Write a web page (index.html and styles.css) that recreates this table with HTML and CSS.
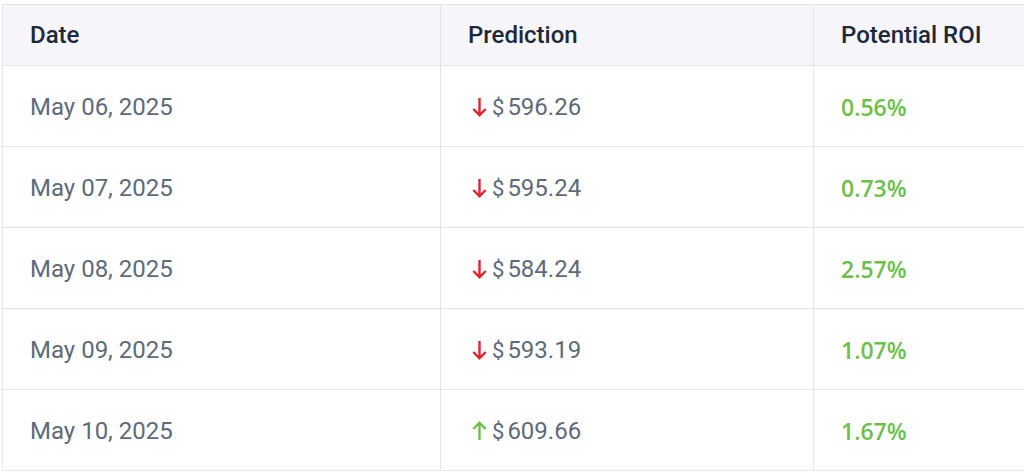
FILE: index.html
```html
<!DOCTYPE html>
<html lang="en">
<head>
<meta charset="utf-8">
<title>Predictions</title>
<link rel="stylesheet" href="styles.css">
</head>
<body>
<div class="table">
  <div class="cell head">Date</div>
  <div class="cell head">Prediction</div>
  <div class="cell head last">Potential ROI</div>

  <div class="cell date">May 06, 2025</div>
  <div class="cell pred"><svg class="arrow down" viewBox="0 0 15 20"><path d="M7.5 1V18.2M1.3 12L7.5 18.2L13.7 12"/></svg><span class="cur">$</span><span class="num">596.26</span></div>
  <div class="cell roi last">0.56%</div>

  <div class="cell date">May 07, 2025</div>
  <div class="cell pred"><svg class="arrow down" viewBox="0 0 15 20"><path d="M7.5 1V18.2M1.3 12L7.5 18.2L13.7 12"/></svg><span class="cur">$</span><span class="num">595.24</span></div>
  <div class="cell roi last">0.73%</div>

  <div class="cell date">May 08, 2025</div>
  <div class="cell pred"><svg class="arrow down" viewBox="0 0 15 20"><path d="M7.5 1V18.2M1.3 12L7.5 18.2L13.7 12"/></svg><span class="cur">$</span><span class="num">584.24</span></div>
  <div class="cell roi last">2.57%</div>

  <div class="cell date">May 09, 2025</div>
  <div class="cell pred"><svg class="arrow down" viewBox="0 0 15 20"><path d="M7.5 1V18.2M1.3 12L7.5 18.2L13.7 12"/></svg><span class="cur">$</span><span class="num">593.19</span></div>
  <div class="cell roi last">1.07%</div>

  <div class="cell date">May 10, 2025</div>
  <div class="cell pred"><svg class="arrow up" viewBox="0 0 15 20"><path d="M7.5 19V1.8M1.3 8L7.5 1.8L13.7 8"/></svg><span class="cur">$</span><span class="num">609.66</span></div>
  <div class="cell roi last">1.67%</div>
</div>
</body>
</html>
```
FILE: styles.css
```css
html, body {
  margin: 0;
  background: #ffffff;
}
body {
  padding: 4px 0 0 2px;
  font-family: Roboto, "Liberation Sans", sans-serif;
}
.table {
  display: grid;
  grid-template-columns: 438px 373px 1fr;
  grid-template-rows: 61px repeat(5, 81px);
  border-top: 1px solid #e4e4ec;
  border-left: 1px solid #e4e4ec;
}
.cell {
  display: flex;
  align-items: center;
  padding-left: 27px;
  border-right: 1px solid #e4e4ec;
  border-bottom: 1px solid #e4e4ec;
  font-size: 24px;
  color: #5e6a7a;
}
.cell.last {
  border-right: none;
}
.head {
  background: #f6f6fa;
  color: #1d293b;
  font-weight: 500;
  padding-bottom: 1px;
}
.date, .pred {
  padding-top: 2px;
}
.pred {
  padding-left: 31px;
}
.arrow {
  width: 15px;
  height: 20px;
  margin-right: 5px;
  margin-bottom: 1px;
  fill: none;
  stroke-width: 2.4;
  stroke-linecap: butt;
  stroke-linejoin: miter;
}
.arrow.down { stroke: #e0262c; }
.arrow.up { stroke: #6cc04a; }
.cur {
  font-size: 22px;
  margin-right: 3px;
}
.roi {
  font-family: "Open Sans", "Noto Sans", sans-serif;
  font-weight: 600;
  font-size: 23px;
  color: #6cc04a;
  padding-top: 2px;
}
```
